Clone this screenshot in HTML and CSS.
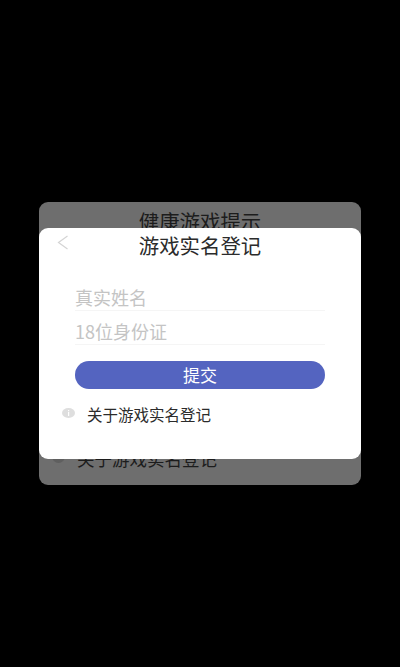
FILE: index.html
```html
<!DOCTYPE html>
<html lang="zh-CN">
<head>
  <meta charset="UTF-8" />
  <meta name="viewport" content="width=device-width, initial-scale=1.0" />
  <title>游戏实名登记</title>
  <link rel="stylesheet" href="styles.css">
</head>
<body>
  <div class="dialog-back">
    <div class="back-title">健康游戏提示</div>
    <div class="back-link">
      <span class="back-dot"></span>
      <span>关于游戏实名登记</span>
    </div>

    <div class="dialog">
      <div class="dialog-head">
        <svg class="arrow" width="12" height="15" viewBox="0 0 12 15">
          <path d="M10.5 1 L1.5 7.5 L10.5 14" fill="none" stroke="#d4d4d4" stroke-width="1.2" />
        </svg>
        <div class="dialog-title">游戏实名登记</div>
      </div>
      <div class="form">
        <div class="field">真实姓名</div>
        <div class="field">18位身份证</div>
        <div class="submit">提交</div>
      </div>
      <div class="about">
        <svg class="info" width="13" height="10" viewBox="0 0 13 10">
          <ellipse cx="6.5" cy="5" rx="6.5" ry="5" fill="#dedede" />
          <rect x="6" y="4" width="1.2" height="4" fill="#fff" />
          <rect x="6" y="2" width="1.2" height="1.2" fill="#fff" />
        </svg>
        <span>关于游戏实名登记</span>
      </div>
    </div>
  </div>
</body>
</html>
```

FILE: styles.css
```css
body {
  margin: 0;
  height: 667px;
  background: #000;
  font-family: "Noto Sans CJK SC", "Liberation Sans", sans-serif;
  display: flex;
  justify-content: center;
  align-items: flex-start;
  overflow: hidden;
}
.dialog-back {
  position: relative;
  margin-top: 202px;
  width: 322px;
  height: 283px;
  box-sizing: border-box;
  padding: 7px 0 0;
  background: #6e6e6e;
  border-radius: 9px;
  display: flex;
  flex-direction: column;
  justify-content: space-between;
}
.back-title {
  text-align: center;
  font-size: 20.4px;
  line-height: 24px;
  color: #1c1c1c;
}
.back-link {
  display: flex;
  align-items: center;
  gap: 12px;
  padding: 0 0 14px 13px;
  font-size: 17.5px;
  line-height: 24px;
  color: #1c1c1c;
}
.back-dot {
  width: 13px;
  height: 13px;
  margin-bottom: 6px;
  border-radius: 50%;
  background: #5f5f5f;
}
.dialog {
  position: absolute;
  top: 26px;
  left: 0;
  right: 0;
  height: 231px;
  background: #fff;
  border-radius: 9px;
}
.dialog-head {
  position: relative;
  padding-top: 4px;
  height: 28px;
}
.arrow {
  position: absolute;
  left: 18px;
  top: 7px;
}
.dialog-title {
  text-align: center;
  font-size: 20.4px;
  line-height: 26px;
  color: #2b2b2b;
}
.form {
  padding: 17px 36px 0;
}
.field {
  padding: 8px 0 1px;
  line-height: 24px;
  font-size: 18px;
  color: #c4c4c4;
  border-bottom: 1px solid #f5f5f5;
}
.submit {
  margin-top: 16px;
  height: 28px;
  line-height: 28px;
  border-radius: 14px;
  background: #5464c0;
  color: #fff;
  font-size: 17px;
  text-align: center;
}
.about {
  display: flex;
  align-items: center;
  gap: 12px;
  padding: 13px 0 0 23px;
  font-size: 15.5px;
  line-height: 24px;
  color: #2b2b2b;
}
.info {
  margin-bottom: 2px;
}
```
